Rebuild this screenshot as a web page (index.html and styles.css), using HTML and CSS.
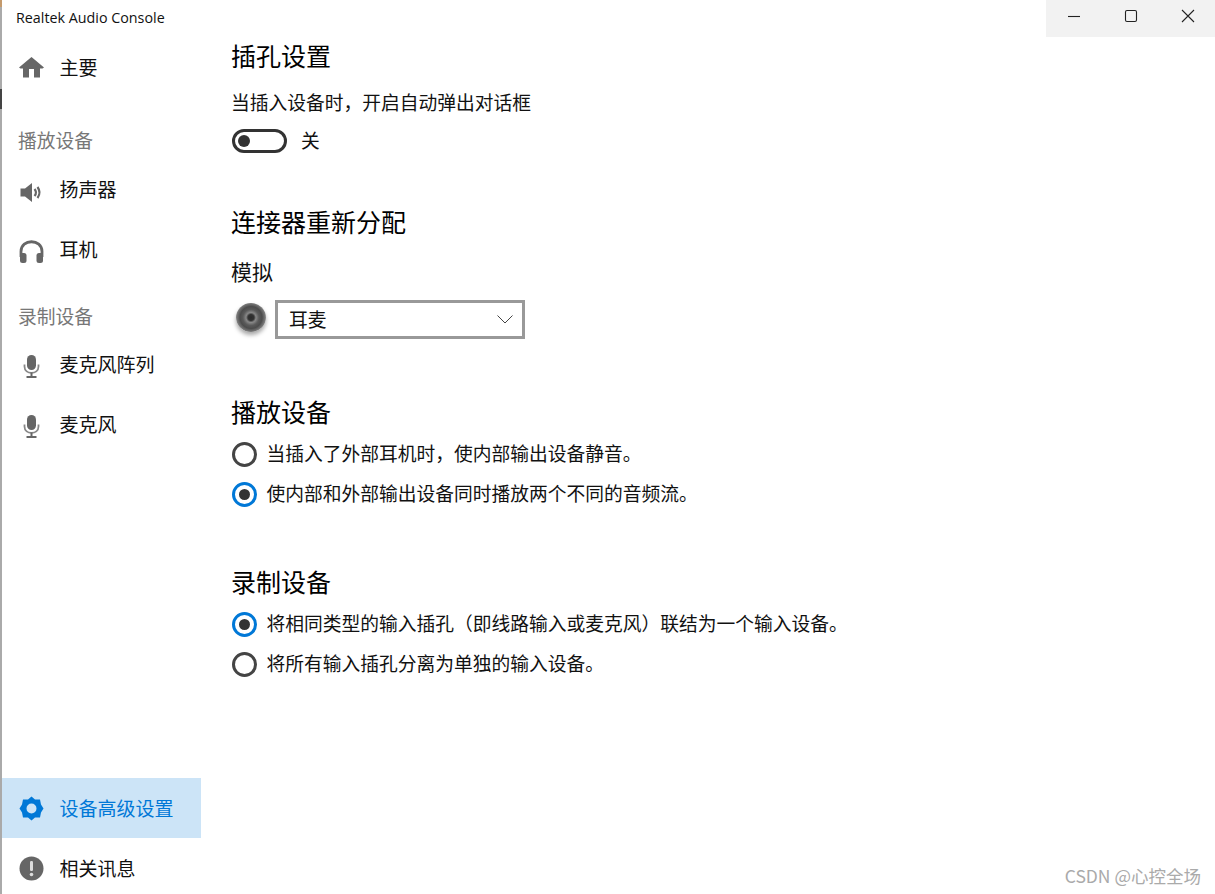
FILE: index.html
```html
<!DOCTYPE html>
<html lang="zh-CN">
<head>
    <meta charset="UTF-8">
    <meta name="viewport" content="width=device-width, initial-scale=1.0">
    <title>Realtek Audio Console</title>
    <link rel="stylesheet" href="styles.css">
</head>
<body>
    <div class="window">
        <div class="titlebar">
            <span class="app-title">Realtek Audio Console</span>
            <div class="win-controls">
                <button class="win-btn" aria-label="minimize">
                    <svg width="14" height="14" viewBox="0 0 14 14"><path d="M1 7.5H13" stroke="#222" stroke-width="1.1"/></svg>
                </button>
                <button class="win-btn" aria-label="maximize">
                    <svg width="14" height="14" viewBox="0 0 14 14"><rect x="1.5" y="1.5" width="11" height="11" rx="1.5" fill="none" stroke="#222" stroke-width="1.1"/></svg>
                </button>
                <button class="win-btn" aria-label="close">
                    <svg width="14" height="14" viewBox="0 0 14 14"><path d="M1 1L13 13M13 1L1 13" stroke="#222" stroke-width="1.1"/></svg>
                </button>
            </div>
        </div>
        <div class="body">
            <nav class="sidebar">
                <a class="nav-item">
                    <svg class="nav-icon" viewBox="0 0 25 25"><path d="M12.5 1L25 11.5L23.5 12.5H21V21.5H15V13H10V21.5H4V12.5H1.5L0 11.5Z" fill="#666"/></svg>
                    <span>主要</span>
                </a>
                <div class="nav-group first">播放设备</div>
                <a class="nav-item">
                    <svg class="nav-icon" viewBox="0 0 25 25"><path d="M1.5 10.5H6L13 5V24L6 18.5H1.5Z" fill="#666"/><path d="M15.5 11Q18.5 14.5 15.5 18M18.5 9Q22.5 14.5 18.5 20" fill="none" stroke="#666" stroke-width="2.2"/></svg>
                    <span>扬声器</span>
                </a>
                <a class="nav-item">
                    <svg class="nav-icon" viewBox="0 0 25 25"><path d="M2 19V13.5C2 0.5 23 0.5 23 13.5V19" fill="none" stroke="#666" stroke-width="2.8"/><rect x="1" y="15" width="6.5" height="10" rx="2.5" fill="#666"/><rect x="17.5" y="15" width="6.5" height="10" rx="2.5" fill="#666"/></svg>
                    <span>耳机</span>
                </a>
                <div class="nav-group">录制设备</div>
                <a class="nav-item">
                    <svg class="nav-icon" viewBox="0 0 25 25"><rect x="8" y="2" width="9" height="15" rx="4.5" fill="#666"/><path d="M5.5 11.5V13.5C5.5 22 19.5 22 19.5 13.5V11.5" fill="none" stroke="#888" stroke-width="1.8"/><path d="M12.5 19.5V23" stroke="#666" stroke-width="2"/><path d="M7.5 24H17.5" stroke="#666" stroke-width="2"/></svg>
                    <span>麦克风阵列</span>
                </a>
                <a class="nav-item">
                    <svg class="nav-icon" viewBox="0 0 25 25"><rect x="8" y="2" width="9" height="15" rx="4.5" fill="#666"/><path d="M5.5 11.5V13.5C5.5 22 19.5 22 19.5 13.5V11.5" fill="none" stroke="#888" stroke-width="1.8"/><path d="M12.5 19.5V23" stroke="#666" stroke-width="2"/><path d="M7.5 24H17.5" stroke="#666" stroke-width="2"/></svg>
                    <span>麦克风</span>
                </a>
                <div class="nav-bottom">
                    <a class="nav-item active">
                        <svg class="nav-icon" viewBox="0 0 25 25"><path fill-rule="evenodd" d="M12.5 0.5L16 3.5L21 3.5L22 8.5L24.5 12.5L22 16.5L21 21.5L16 21.5L12.5 24.5L9 21.5L4 21.5L3 16.5L0.5 12.5L3 8.5L4 3.5L9 3.5ZM12.5 7.5A5 5 0 1 0 12.5 17.5A5 5 0 1 0 12.5 7.5Z" fill="#0078d7"/></svg>
                        <span>设备高级设置</span>
                    </a>
                    <a class="nav-item">
                        <svg class="nav-icon" viewBox="0 0 25 25"><circle cx="12.5" cy="12.5" r="12" fill="#666"/><rect x="11" y="5" width="3" height="10" rx="1.2" fill="#ddd"/><circle cx="12.5" cy="18.5" r="1.8" fill="#ddd"/></svg>
                        <span>相关讯息</span>
                    </a>
                </div>
            </nav>
            <main class="content">
                <h2 class="heading">插孔设置</h2>
                <p class="line desc">当插入设备时，开启自动弹出对话框</p>
                <div class="toggle-row">
                    <span class="toggle"><span class="knob"></span></span>
                    <span class="toggle-text">关</span>
                </div>

                <h2 class="heading connector">连接器重新分配</h2>
                <p class="line analog">模拟</p>
                <div class="jack-row">
                    <span class="jack"></span>
                    <div class="select">
                        <span class="select-text">耳麦</span>
                        <svg width="16" height="9" viewBox="0 0 16 9"><path d="M0.5 0.5L8 8L15.5 0.5" fill="none" stroke="#444" stroke-width="1"/></svg>
                    </div>
                </div>

                <h2 class="heading playback">播放设备</h2>
                <label class="radio-row"><span class="radio"></span><span class="radio-text">当插入了外部耳机时，使内部输出设备静音。</span></label>
                <label class="radio-row"><span class="radio on"></span><span class="radio-text">使内部和外部输出设备同时播放两个不同的音频流。</span></label>

                <h2 class="heading record">录制设备</h2>
                <label class="radio-row"><span class="radio on"></span><span class="radio-text">将相同类型的输入插孔（即线路输入或麦克风）联结为一个输入设备。</span></label>
                <label class="radio-row"><span class="radio"></span><span class="radio-text">将所有输入插孔分离为单独的输入设备。</span></label>
            </main>
        </div>
        <div class="watermark">CSDN @心控全场</div>
    </div>
</body>
</html>
```

FILE: styles.css
```css
* {
    box-sizing: border-box;
}
html, body {
    margin: 0;
    height: 100%;
}
body {
    font-family: "Noto Sans CJK SC", "Noto Sans", sans-serif;
    font-size: 18.75px;
    color: #111;
    background: #fff;
    overflow: hidden;
}
.window {
    position: relative;
    display: flex;
    flex-direction: column;
    height: 100vh;
    overflow: hidden;
    border-left: 2px solid #aaa;
    border-image: linear-gradient(to bottom, #c49a6c 0, #c49a6c 8px, #aaa 8px, #aaa 90px, #444 90px, #444 110px, #aaa 110px) 1;
}
.titlebar {
    display: flex;
    justify-content: space-between;
    height: 37px;
    flex: none;
}
.app-title {
    font-family: "Open Sans", sans-serif;
    font-size: 14.3px;
    line-height: 36px;
    padding-left: 14px;
    color: #111;
}
.win-controls {
    display: flex;
    width: 169px;
    background: #f2f2f2;
}
.win-btn {
    flex: none;
    display: flex;
    align-items: center;
    justify-content: center;
    width: 56.8px;
    padding: 0 0 5px;
    border: none;
    background: none;
}
.body {
    display: flex;
    flex: 1;
    min-height: 0;
}
.sidebar {
    display: flex;
    flex-direction: column;
    width: 199px;
    flex: none;
    padding-top: 1px;
}
.nav-item {
    display: flex;
    align-items: center;
    gap: 15.4px;
    flex: none;
    height: 60px;
    padding-left: 17px;
    font-size: 19px;
}
.nav-item span {
    padding-bottom: 3px;
}
.nav-bottom .nav-item span {
    padding-bottom: 1px;
}
.nav-icon {
    width: 25px;
    height: 25px;
    flex: none;
}
.nav-item.active {
    background: #cce4f7;
    color: #0078d7;
}
.nav-group {
    flex: none;
    height: 55px;
    padding: 22px 0 0 16px;
    line-height: 28px;
    color: #777;
}
.nav-group.first {
    height: 62px;
    padding-top: 28px;
}
.nav-bottom {
    margin-top: auto;
    margin-bottom: -4px;
}
.content {
    flex: 1;
    padding: 3px 0 0 31px;
}
.heading {
    height: 34px;
    margin: 0 0 0 -1px;
    font-size: 25px;
    font-weight: 400;
    line-height: 30px;
    color: #000;
}
.line {
    margin: 0 0 0 -1px;
    line-height: 28px;
}
.desc {
    margin-top: 14px;
}
.toggle-row {
    display: flex;
    align-items: center;
    gap: 14px;
    height: 24px;
    margin-top: 13px;
}
.toggle {
    display: flex;
    align-items: center;
    width: 55px;
    height: 24px;
    padding-left: 3px;
    border: 3px solid #333;
    border-radius: 12px;
}
.knob {
    width: 12px;
    height: 12px;
    border-radius: 50%;
    background: #333;
}
.toggle-text {
    padding-bottom: 4px;
}
.connector {
    margin-top: 53px;
}
.analog {
    margin-top: 18px;
    line-height: 26px;
    height: 28px;
    font-size: 21px;
}
.jack-row {
    display: flex;
    align-items: center;
    gap: 5px;
    margin-top: 14px;
}
.jack {
    width: 30px;
    height: 29px;
    margin: 0 4px 5px;
    border-radius: 50%;
    background: radial-gradient(circle at 50% 50%, #2a2a2a 0, #333 3px, #888 5px, #5a5a5a 8px, #4c4c4c 11px, #777 14px, #aaa 16px);
    box-shadow: 0 3px 4px rgba(0, 0, 0, 0.35);
}
.select {
    display: flex;
    align-items: center;
    justify-content: space-between;
    width: 250px;
    height: 39px;
    padding: 0 9px 0 11px;
    border: 3px solid #999;
}
.select-text {
    padding-bottom: 2px;
}
.playback {
    margin-top: 57px;
    margin-bottom: 4px;
}
.record {
    margin-top: 52px;
    margin-bottom: 4px;
}
.radio-row {
    display: flex;
    align-items: center;
    gap: 9.4px;
    height: 40px;
}
.radio-text {
    padding-bottom: 4px;
}
.radio {
    display: flex;
    align-items: center;
    justify-content: center;
    width: 25px;
    height: 25px;
    border: 3px solid #444;
    border-radius: 50%;
}
.radio.on {
    border-color: #0078d7;
}
.radio.on::after {
    content: "";
    width: 11px;
    height: 11px;
    border-radius: 50%;
    background: #333;
}
.watermark {
    position: absolute;
    right: 14px;
    bottom: 6px;
    font-size: 17.5px;
    line-height: 24px;
    color: #aaa;
}
```
